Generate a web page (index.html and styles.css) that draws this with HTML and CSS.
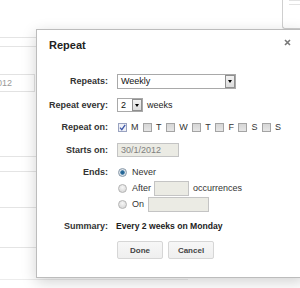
FILE: index.html
```html
<!DOCTYPE html>
<html lang="en">
<head>
    <meta charset="UTF-8">
    <title>Repeat</title>
    <link rel="stylesheet" href="styles.css">
</head>
<body>
<div class="page">
    <div class="left-col">
        <div class="rule rule-a"></div>
        <div class="rule rule-b"></div>
        <div class="date-box">30/1/2012</div>
        <div class="rule rule-c"></div>
        <div class="rule rule-d"></div>
        <div class="rule rule-e"></div>
        <div class="rule rule-f"></div>
        <div class="rule rule-g"></div>
    </div>
    <div class="right-col">
        <div class="menu-box">
            <div class="menu-line"></div>
            <div class="menu-line"></div>
        </div>
        <div class="rule rule-h"></div>
        <div class="ghost">es</div>
        <div class="rule rule-i"></div>
        <div class="side-text">no</div>
        <div class="side-text">nvi</div>
        <div class="side-text">se</div>
    </div>
</div>

<div class="dialog">
    <div class="dlg-head">
        <span class="dlg-title">Repeat</span>
        <svg class="dlg-close" width="7" height="7" viewBox="0 0 7 7">
            <path d="M1 1L6 6M6 1L1 6" stroke="#777" stroke-width="1.6"/>
        </svg>
    </div>

    <div class="row row-repeats">
        <span class="label">Repeats:</span>
        <span class="select select-wide">
            <span class="select-text">Weekly</span>
            <span class="select-btn"><i class="tri"></i></span>
        </span>
    </div>

    <div class="row row-every">
        <span class="label">Repeat every:</span>
        <span class="select select-num">
            <span class="select-text">2</span>
            <span class="select-btn"><i class="tri"></i></span>
        </span>
        <span class="after-text">weeks</span>
    </div>

    <div class="row row-on">
        <span class="label">Repeat on:</span>
        <span class="day"><span class="cb checked"><svg width="7" height="7" viewBox="0 0 7 7"><path d="M1 3.6L2.8 5.6L6.2 0.8" fill="none" stroke="#3d57a8" stroke-width="1.3"/></svg></span>M</span>
        <span class="day"><span class="cb"></span>T</span>
        <span class="day"><span class="cb"></span>W</span>
        <span class="day"><span class="cb"></span>T</span>
        <span class="day"><span class="cb"></span>F</span>
        <span class="day"><span class="cb"></span>S</span>
        <span class="day"><span class="cb"></span>S</span>
    </div>

    <div class="row row-starts">
        <span class="label">Starts on:</span>
        <span class="input input-date">30/1/2012</span>
    </div>

    <div class="row row-ends">
        <span class="label">Ends:</span>
        <div class="ends">
            <div class="end-line"><span class="radio checked"></span>Never</div>
            <div class="end-line"><span class="radio"></span>After<span class="input input-count"></span>occurrences</div>
            <div class="end-line end-on"><span class="radio"></span>On<span class="input input-until"></span></div>
        </div>
    </div>

    <div class="row row-summary">
        <span class="label">Summary:</span>
        <span class="summary">Every 2 weeks on Monday</span>
    </div>

    <div class="buttons">
        <button class="btn">Done</button>
        <button class="btn">Cancel</button>
    </div>
</div>
</body>
</html>
```

FILE: styles.css
```css
html, body {
    margin: 0;
    padding: 0;
    background: #fff;
    overflow: hidden;
    font-family: "Liberation Sans", Arial, sans-serif;
    font-size: 8.5px;
    color: #222;
}
.page {
    display: flex;
    justify-content: space-between;
    width: 300px;
    height: 288px;
}

/* page behind the dialog */
.left-col {
    width: 188px;
}
.rule {
    border-top: 1px solid #e4e4e4;
}
.rule-a { margin-top: 37px; }
.rule-b { margin-top: 8px; }
.date-box {
    margin-top: 27px;
    width: 34px;
    height: 16px;
    box-sizing: content-box;
    border: 1px solid #e2e2e2;
    border-left: 0;
    padding-right: 22px;
    margin-left: -22px;
    text-align: right;
    line-height: 16px;
    font-size: 9px;
    color: #999;
    white-space: nowrap;
    overflow: hidden;
    direction: rtl;
}
.rule-c { margin-top: 64px; }
.rule-d { margin-top: 14px; }
.rule-e { margin-top: 35px; }
.rule-f { margin-top: 39px; }
.rule-g { margin-top: 31px; border-color: #ececec; }

.right-col {
    width: 18px;
}
.menu-box {
    height: 28px;
    border-left: 1px solid #cfcfcf;
    border-bottom: 1px solid #cfcfcf;
    border-bottom-left-radius: 3px;
    padding-left: 6px;
}
.menu-line {
    border-top: 1px solid #e2e2e2;
    margin-bottom: 3px;
}
.rule-h { margin-top: 111px; }
.ghost {
    margin-top: 34px;
    padding-left: 9px;
    color: #c4c4c4;
    font-size: 9px;
}
.rule-i { margin-top: 9px; }
.side-text {
    padding-left: 9px;
    margin-top: 3px;
    line-height: 10px;
    font-size: 9px;
    color: #777;
}

/* dialog */
.dialog {
    position: absolute;
    left: 36px;
    top: 29px;
    width: 242px;
    height: 239px;
    padding: 8px 13px 0 12px;
    background: #fff;
    border: 1px solid #bcbcbc;
    box-shadow: 0 4px 14px rgba(0, 0, 0, .18);
}
.dlg-head {
    display: flex;
    justify-content: space-between;
    height: 14px;
}
.dlg-title {
    font-size: 11px;
    font-weight: bold;
    line-height: 14px;
    color: #222;
}
.dlg-close {
    margin-top: 1px;
}

.row {
    display: flex;
    align-items: center;
    height: 16px;
}
.label {
    width: 59px;
    margin-right: 9px;
    text-align: right;
    font-size: 9px;
    font-weight: bold;
    color: #333;
    white-space: nowrap;
    flex-shrink: 0;
}
.row-repeats { margin-top: 21px; }
.row-every { margin-top: 8px; }
.row-on { margin-top: 6px; }
.row-starts { margin-top: 7px; }
.row-ends {
    margin-top: 6px;
    height: 48px;
    align-items: flex-start;
}
.row-ends .label {
    line-height: 16px;
}
.row-summary { margin-top: 6px; }

.select {
    display: flex;
    justify-content: space-between;
    box-sizing: border-box;
    border: 1px solid #a9a9a9;
    background: #fff;
}
.select-wide {
    width: 119px;
    height: 15px;
}
.select-num {
    width: 26px;
    height: 14px;
}
.select-text {
    padding-left: 3px;
    line-height: 13px;
    font-size: 9px;
    color: #111;
}
.select-btn {
    width: 10px;
    box-sizing: border-box;
    border: 1px solid #8f8f8f;
    background: linear-gradient(#f2f2f2, #dcdcdc);
    display: flex;
    align-items: center;
    justify-content: center;
}
.tri {
    width: 0;
    height: 0;
    border-left: 2.5px solid transparent;
    border-right: 2.5px solid transparent;
    border-top: 3px solid #000;
}
.after-text {
    margin-left: 4px;
    font-size: 9px;
}

.day {
    display: flex;
    align-items: center;
    margin-right: 4.6px;
    color: #333;
    font-size: 9px;
}
.cb {
    width: 9px;
    height: 9px;
    box-sizing: border-box;
    border: 1px solid #a4a4a4;
    background: linear-gradient(#d6d6d6, #e6e6e6);
    margin-right: 4px;
    display: flex;
    align-items: center;
    justify-content: center;
}
.cb.checked {
    background: #eef0f6;
    border-color: #9aa3c0;
}
.row-on .label { margin-right: 10px; }

.input {
    display: inline-block;
    box-sizing: border-box;
    background: #ebebe4;
    border: 1px solid #c4c4c4;
}
.input-date {
    width: 62px;
    height: 14px;
    padding-left: 3px;
    line-height: 12px;
    font-size: 9px;
    color: #808080;
}

.ends {
    display: flex;
    flex-direction: column;
}
.end-line {
    display: flex;
    align-items: center;
    height: 16px;
    font-size: 9px;
    color: #333;
}
.radio {
    width: 9px;
    height: 9px;
    box-sizing: border-box;
    border-radius: 50%;
    border: 1px solid #b4b4b4;
    background: radial-gradient(circle at 50% 35%, #f6f6f6, #d2d2d2);
    margin: 0 5px 0 1px;
}
.radio.checked {
    border-color: #8a9aaa;
    background: radial-gradient(circle, #1f5f8f 0, #2d6f9e 1.8px, #dfe6ec 2.6px, #c8d0d8 100%);
}
.input-count {
    width: 35px;
    height: 15px;
    margin: 0 4px 0 3px;
}
.input-until {
    width: 61px;
    height: 15px;
    margin-left: 4px;
}

.summary {
    margin-left: -1px;
    font-weight: bold;
    font-size: 8.6px;
    color: #222;
}

.buttons {
    display: flex;
    gap: 5px;
    margin-top: 7px;
    padding-left: 68px;
}
.btn {
    width: 46px;
    height: 18px;
    padding: 0;
    border: 1px solid #d6d6d6;
    border-radius: 2px;
    background: linear-gradient(#f7f7f7, #efefef);
    font-family: "Liberation Sans", Arial, sans-serif;
    font-size: 8px;
    font-weight: bold;
    color: #444;
}
```
